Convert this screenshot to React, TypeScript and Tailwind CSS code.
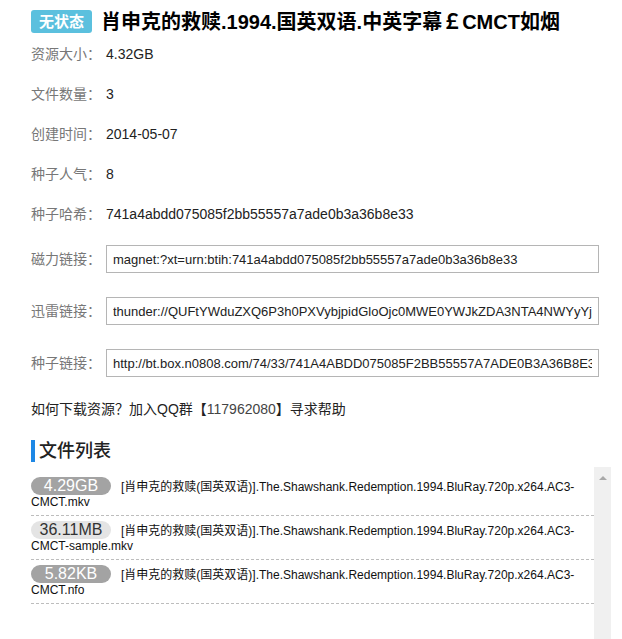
import React from "react";

const infoRows = [
  { label: "资源大小：", value: "4.32GB" },
  { label: "文件数量：", value: "3" },
  { label: "创建时间：", value: "2014-05-07" },
  { label: "种子人气：", value: "8" },
  { label: "种子哈希：", value: "741a4abdd075085f2bb55557a7ade0b3a36b8e33" },
];

const linkRows = [
  { label: "磁力链接：", value: "magnet:?xt=urn:btih:741a4abdd075085f2bb55557a7ade0b3a36b8e33" },
  {
    label: "迅雷链接：",
    value:
      "thunder://QUFtYWduZXQ6P3h0PXVybjpidGloOjc0MWE0YWJkZDA3NTA4NWYyYjJiNTU1NTdhN2FkZTBiM2EzNmI4ZTMzWlo=",
  },
  {
    label: "种子链接：",
    value: "http://bt.box.n0808.com/74/33/741A4ABDD075085F2BB55557A7ADE0B3A36B8E33.torrent",
  },
];

const files = [
  { size: "4.29GB", name: "[肖申克的救赎(国英双语)].The.Shawshank.Redemption.1994.BluRay.720p.x264.AC3-CMCT.mkv", light: false },
  { size: "36.11MB", name: "[肖申克的救赎(国英双语)].The.Shawshank.Redemption.1994.BluRay.720p.x264.AC3-CMCT-sample.mkv", light: true },
  { size: "5.82KB", name: "[肖申克的救赎(国英双语)].The.Shawshank.Redemption.1994.BluRay.720p.x264.AC3-CMCT.nfo", light: false },
];

export default function App() {
  return (
    <div className="w-[622px] h-[639px] overflow-hidden bg-white font-['Liberation_Sans','Noto_Sans_CJK_SC',sans-serif] text-[#222]">
      <div className="pl-[31px] pt-[10px]">
        {/* Title */}
        <div className="flex items-center h-[23px]">
          <span className="inline-flex items-center h-[23px] px-[8px] rounded-[3px] bg-[#5bc0de] text-white text-[15px] font-bold leading-none">
            无状态
          </span>
          <h1 className="ml-[9px] text-[20px] font-bold text-black leading-none whitespace-nowrap">
            肖申克的救赎.1994.国英双语.中英字幕￡CMCT如烟
          </h1>
        </div>

        {/* Info rows */}
        <div className="mt-[11px] flex flex-col gap-[20px]">
          {infoRows.map((r) => (
            <div key={r.label} className="flex items-center h-[20px] text-[14px] leading-[20px]">
              <span className="w-[75px] text-[#777]">{r.label}</span>
              <span className="text-[#222]">{r.value}</span>
            </div>
          ))}
        </div>

        {/* Link rows */}
        <div className="mt-[21px] flex flex-col gap-[24px]">
          {linkRows.map((r) => (
            <div key={r.label} className="flex items-center h-[28px]">
              <span className="w-[75px] text-[14px] text-[#777]">{r.label}</span>
              <input
                readOnly
                value={r.value}
                className="w-[493px] h-[28px] border border-[#b5b5b5] bg-white px-[6px] text-[13px] text-[#222] outline-none"
              />
            </div>
          ))}
        </div>

        {/* Help */}
        <div className="mt-[22px] text-[14px] leading-[20px] text-[#222]">
          如何下载资源？加入QQ群【<span className="text-[#444]">117962080</span>】寻求帮助
        </div>

        {/* Heading */}
        <div className="mt-[21px] flex items-center h-[22px]">
          <span className="w-[4px] h-[22px] bg-[#1e88e5]" />
          <span className="ml-[4px] text-[18px] font-medium text-[#222] leading-none">文件列表</span>
        </div>

        {/* File list */}
        <div className="mt-[5px] flex w-[580px] h-[180px]">
          <div className="flex-1 pt-[5px]">
            {files.map((f) => (
              <div
                key={f.size}
                className="pt-[5px] pb-[5px] border-b border-dashed border-[#bdbdbd] text-[12px] leading-[15px] text-[#111]"
              >
                <span
                  className={
                    "inline-block w-[80px] h-[18px] mr-[10px] rounded-full text-center text-[16px] leading-[18px] " +
                    (f.light ? "bg-[#e4e4e4] text-[#333]" : "bg-[#a3a3a3] text-white")
                  }
                >
                  {f.size}
                </span>
                {f.name}
              </div>
            ))}
          </div>
          <div className="w-[17px] bg-[#f0f0f0] flex justify-center pt-[9px]">
            <div className="w-0 h-0 border-l-[4px] border-r-[4px] border-b-[4px] border-l-transparent border-r-transparent border-b-[#a8a8a8]" />
          </div>
        </div>
      </div>
    </div>
  );
}
